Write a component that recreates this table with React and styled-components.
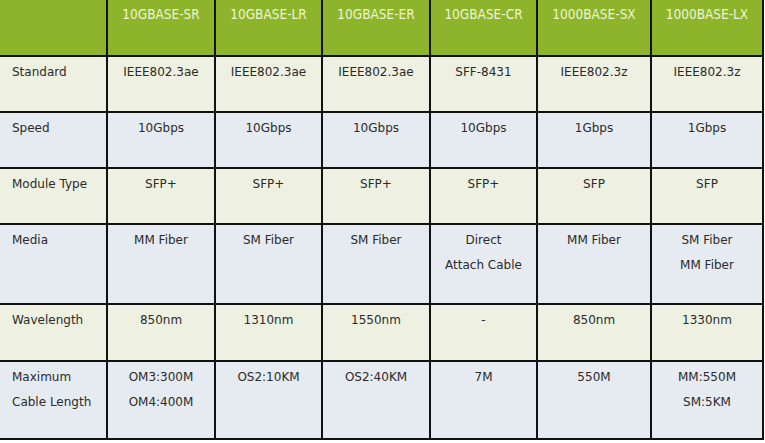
import React from "react";
import styled, { createGlobalStyle } from "styled-components";

const GlobalStyle = createGlobalStyle`
  html, body {
    margin: 0;
    padding: 0;
    background: #ffffff;
  }
`;

const columns = ["10GBASE-SR", "10GBASE-LR", "10GBASE-ER", "10GBASE-CR", "1000BASE-SX", "1000BASE-LX"];
const widths = [107, 108, 107, 108, 107, 114, 112];

const rows = [
  { label: ["Standard"], height: 56, tone: "green", cells: [["IEEE802.3ae"], ["IEEE802.3ae"], ["IEEE802.3ae"], ["SFF-8431"], ["IEEE802.3z"], ["IEEE802.3z"]] },
  { label: ["Speed"], height: 56, tone: "blue", cells: [["10Gbps"], ["10Gbps"], ["10Gbps"], ["10Gbps"], ["1Gbps"], ["1Gbps"]] },
  { label: ["Module Type"], height: 56, tone: "green", cells: [["SFP+"], ["SFP+"], ["SFP+"], ["SFP+"], ["SFP"], ["SFP"]] },
  { label: ["Media"], height: 80, tone: "blue", cells: [["MM Fiber"], ["SM Fiber"], ["SM Fiber"], ["Direct", "Attach Cable"], ["MM Fiber"], ["SM Fiber", "MM Fiber"]] },
  { label: ["Wavelength"], height: 57, tone: "green", cells: [["850nm"], ["1310nm"], ["1550nm"], ["-"], ["850nm"], ["1330nm"]] },
  { label: ["Maximum", "Cable Length"], height: 78, tone: "blue", cells: [["OM3:300M", "OM4:400M"], ["OS2:10KM"], ["OS2:40KM"], ["7M"], ["550M"], ["MM:550M", "SM:5KM"]] },
];

const Table = styled.table`
  border-collapse: collapse;
  table-layout: fixed;
  width: 764px;
  font-family: "DejaVu Sans", Verdana, sans-serif;
`;

const HeadRow = styled.tr`
  height: 56px;
  background: #8db42a;
`;

const HeadCell = styled.th`
  padding: 6px 0 0;
  color: #eef5d6;
  font-family: "DejaVu Sans Condensed", "DejaVu Sans", sans-serif;
  font-weight: normal;
  font-size: 13.5px;
  vertical-align: top;
  text-align: center;
  border: 2px solid #111;
  border-top: none;
  &:first-child {
    border-left: none;
  }
`;

const Row = styled.tr`
  height: ${(p) => p.$h}px;
  background: ${(p) => (p.$tone === "green" ? "#eef1e1" : "#e5ebf1")};
`;

const Cell = styled.td`
  padding: 3px 0 0;
  font-size: 12px;
  line-height: 25px;
  color: #2b2b2b;
  vertical-align: top;
  text-align: ${(p) => (p.$label ? "left" : "center")};
  padding-left: ${(p) => (p.$label ? "12px" : "0")};
  border: 2px solid #111;
  &:first-child {
    border-left: none;
  }
`;

const Line = styled.div`
  white-space: nowrap;
`;

export default function App() {
  return (
    <>
      <GlobalStyle />
      <Table>
        <colgroup>
          {widths.map((w, i) => (
            <col key={i} style={{ width: w }} />
          ))}
        </colgroup>
        <thead>
          <HeadRow>
            <HeadCell />
            {columns.map((c) => (
              <HeadCell key={c}>{c}</HeadCell>
            ))}
          </HeadRow>
        </thead>
        <tbody>
          {rows.map((r) => (
            <Row key={r.label[0]} $h={r.height} $tone={r.tone}>
              <Cell $label>
                {r.label.map((l) => (
                  <Line key={l}>{l}</Line>
                ))}
              </Cell>
              {r.cells.map((c, i) => (
                <Cell key={i}>
                  {c.map((l) => (
                    <Line key={l}>{l}</Line>
                  ))}
                </Cell>
              ))}
            </Row>
          ))}
        </tbody>
      </Table>
    </>
  );
}
